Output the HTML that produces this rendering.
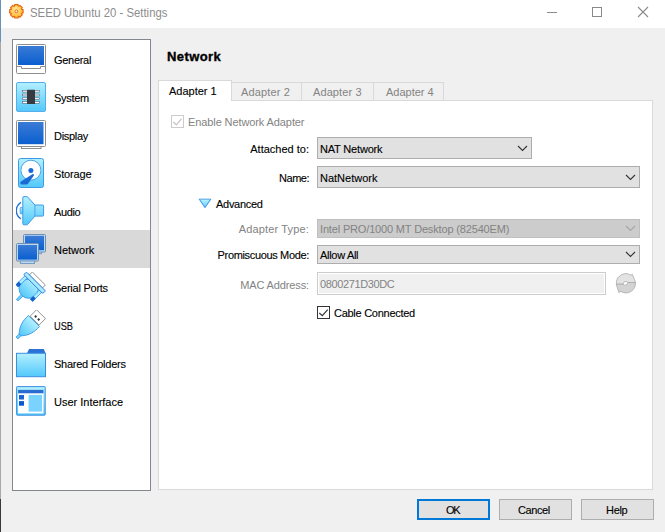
<!DOCTYPE html>
<html><head><meta charset="utf-8">
<style>
*{margin:0;padding:0;box-sizing:border-box}
html,body{width:665px;height:532px;overflow:hidden;background:#f0f0f0}
body{position:relative;font-family:"Liberation Sans",sans-serif;font-size:11px;color:#000;-webkit-text-stroke:0.12px currentColor}
.a{position:absolute}
.t{position:absolute;white-space:nowrap;line-height:13px;height:13px;font-size:11px}
.r{text-align:right}
.g{color:#838383;-webkit-text-stroke:0}
#title{left:0;top:0;width:665px;height:28px;background:#fff}
#lborder{left:0;top:0;width:1px;height:532px;background:linear-gradient(#6b93b8 0,#6b93b8 42px,#a9a9a9 42px,#a9a9a9 499px,#343a34 499px)}
#list{left:12px;top:39px;width:139px;height:452px;background:#fff;border:1px solid #828790}
.sel{left:13px;top:230px;width:137px;height:38px;background:#d9d9d9}
.ic{position:absolute;left:16px;width:30px;height:30px}
#pane{left:158px;top:100px;width:495px;height:390px;background:#fff;border:1px solid #d9d9d9}
.tab{position:absolute;top:82px;height:19px;background:#f0f0f0;border:1px solid #d9d9d9;border-bottom:none}
.tabsel{position:absolute;left:158px;top:80px;width:74px;height:21px;background:#fff;border:1px solid #d9d9d9;border-bottom:none}
.cb{position:absolute;left:317px;background:#e1e1e1;border:1px solid #adadad}
.cbd{background:#cccccc;border-color:#bfbfbf}
.btn{position:absolute;top:499px;width:73px;height:21px;background:#e1e1e1;border:1px solid #adadad;text-align:center;line-height:19px}
</style></head><body>
<div id="title" class="a"></div>
<div id="lborder" class="a"></div>

<!-- title bar -->
<svg class="a" style="left:8px;top:3px" width="17" height="17" viewBox="0 0 17 17">
  <defs><radialGradient id="gg" cx="0.45" cy="0.35" r="0.7"><stop offset="0" stop-color="#ffe690"/><stop offset="1" stop-color="#ffb42c"/></radialGradient></defs>
  <path d="M6.58 3.01 L6.73 1.60 L10.07 1.60 L10.22 3.01 L10.85 3.27 L11.95 2.39 L14.31 4.75 L13.43 5.85 L13.69 6.48 L15.10 6.63 L15.10 9.97 L13.69 10.12 L13.43 10.75 L14.31 11.85 L11.95 14.21 L10.85 13.33 L10.22 13.59 L10.07 15.00 L6.73 15.00 L6.58 13.59 L5.95 13.33 L4.85 14.21 L2.49 11.85 L3.37 10.75 L3.11 10.12 L1.70 9.97 L1.70 6.63 L3.11 6.48 L3.37 5.85 L2.49 4.75 L4.85 2.39 L5.95 3.27 Z" fill="url(#gg)" stroke="#e8640c" stroke-width="1.15" stroke-linejoin="round"/>
  <circle cx="8.4" cy="8.3" r="1.4" fill="#fff0d0" stroke="#e06010" stroke-width="0.9"/>
</svg>
<div class="t" style="left:30px;top:6px;font-size:12px;line-height:14px;height:14px;color:#8c8c8c;-webkit-text-stroke:0;transform:scaleX(0.945);transform-origin:0 0">SEED Ubuntu 20 - Settings</div>
<div class="a" style="left:547px;top:12px;width:10px;height:1px;background:#8a8a8a"></div>
<div class="a" style="left:592px;top:7px;width:10px;height:10px;border:1px solid #8a8a8a"></div>
<svg class="a" style="left:637px;top:6px" width="12" height="12" viewBox="0 0 12 12"><path d="M1 1 L11 11 M11 1 L1 11" stroke="#8a8a8a" stroke-width="1.1"/></svg>

<!-- list -->
<div id="list" class="a"></div>
<div class="a sel"></div>

<svg width="0" height="0" style="position:absolute">
 <defs>
  <linearGradient id="blu" x1="0" y1="0" x2="0" y2="1"><stop offset="0" stop-color="#3a7bd5"/><stop offset="1" stop-color="#0a5fd0"/></linearGradient>
  <linearGradient id="lb" x1="0" y1="0" x2="0" y2="1"><stop offset="0" stop-color="#b4f0ff"/><stop offset="1" stop-color="#52c8fa"/></linearGradient>
 </defs>
</svg>

<!-- General -->
<svg class="ic" style="top:44px" viewBox="0 0 30 30">
 <rect x="0.5" y="0.5" width="29" height="29" rx="1" fill="#fff" stroke="#8e8e8e"/>
 <rect x="2" y="2" width="26" height="19" fill="url(#blu)"/>
 <path d="M0.5 22.5 H5.5 V24.5 H24.5 V22.5 H29.5" fill="none" stroke="#8e8e8e"/>
</svg>
<div class="t" style="left:54px;top:54px;letter-spacing:-0.3px">General</div>

<!-- System -->
<svg class="ic" style="top:82px" viewBox="0 0 30 30">
 <rect x="0.5" y="0.5" width="29" height="29" rx="1.5" fill="url(#lb)" stroke="#58aeec"/>
 <g fill="#fff" stroke="#5a6a7a" stroke-width="0.6">
  <rect x="6.6" y="8.3" width="5" height="1.8"/><rect x="6.6" y="12.1" width="5" height="1.8"/><rect x="6.6" y="15.8" width="5" height="1.8"/><rect x="6.6" y="19.6" width="5" height="1.8"/>
  <rect x="18.4" y="8.3" width="5" height="1.8"/><rect x="18.4" y="12.1" width="5" height="1.8"/><rect x="18.4" y="15.8" width="5" height="1.8"/><rect x="18.4" y="19.6" width="5" height="1.8"/>
 </g>
 <rect x="11" y="7.8" width="8" height="14.3" rx="0.5" fill="#383a42"/>
</svg>
<div class="t" style="left:54px;top:92px;letter-spacing:-0.3px">System</div>

<!-- Display -->
<svg class="ic" style="top:120px" viewBox="0 0 30 30">
 <rect x="5.5" y="25" width="19.5" height="3.5" fill="#fff" stroke="#8e8e8e"/>
 <rect x="0.5" y="0.5" width="29" height="26" rx="1" fill="#fff" stroke="#8e8e8e"/>
 <rect x="2" y="2" width="25.5" height="22.2" fill="url(#blu)"/>
</svg>
<div class="t" style="left:54px;top:130px;letter-spacing:-0.3px">Display</div>

<!-- Storage -->
<svg class="ic" style="top:158px" viewBox="0 0 30 30">
 <rect x="2.5" y="0.5" width="25" height="29" rx="2" fill="url(#lb)" stroke="#3e9ae6"/>
 <circle cx="14.9" cy="12.2" r="10" fill="#fff" stroke="#4aa6ea" stroke-width="1"/>
 <circle cx="14.9" cy="12.4" r="2.5" fill="#1a6ad6"/>
 <path d="M4.3 24 L16.3 16.2 Q18.5 15.5 17.9 17.6 L12.2 25.6 Q11.6 26.6 10.4 26.6 L5.6 26.6 Q4 26.5 4.3 24 Z" fill="#1a6ad6"/>
</svg>
<div class="t" style="left:54px;top:168px;letter-spacing:-0.15px">Storage</div>

<!-- Audio -->
<svg class="ic" style="top:196px" viewBox="0 0 30 30">
 <path d="M4.9 6.4 A9.6 9.6 0 0 0 4.9 22.8" fill="none" stroke="#2070d8" stroke-width="1.4"/>
 <rect x="4.2" y="11.4" width="2.6" height="6.4" rx="0.6" fill="url(#lb)" stroke="#3e9ae6" stroke-width="0.8"/>
 <path d="M6.8 1.6 Q6.8 0.6 8 0.6 L10.6 0.6 Q11.3 0.6 11.8 1.1 L18.9 9 L26.6 9 Q27.6 9 27.6 10 L27.6 19.2 Q27.6 20.1 26.6 20.1 L18.9 20.1 L11.8 28.2 Q11.3 28.8 10.6 28.8 L8 28.8 Q6.8 28.8 6.8 27.6 Z" fill="url(#lb)" stroke="#3e9ae6"/>
 <path d="M18.9 9 V20.1" stroke="#3e9ae6" stroke-width="0.8"/>
</svg>
<div class="t" style="left:54px;top:206px;letter-spacing:-0.35px">Audio</div>

<!-- Network -->
<svg class="ic" style="top:234px" viewBox="0 0 30 30">
 <rect x="12" y="17.5" width="13.5" height="2.2" fill="#b8d8f4" stroke="#7a9cc0"/>
 <rect x="7.5" y="0.5" width="22" height="17.5" rx="1" fill="#b8d8f4" stroke="#6e90b4"/>
 <rect x="9" y="1.8" width="19" height="14.4" fill="url(#blu)"/>
 <rect x="0.5" y="9.5" width="22" height="17.6" rx="1" fill="#b8d8f4" stroke="#6e90b4"/>
 <rect x="2" y="11" width="19" height="14.6" fill="url(#blu)"/>
 <rect x="4.5" y="27" width="14" height="2.5" fill="#b8d8f4" stroke="#7a9cc0"/>
</svg>
<div class="t" style="left:54px;top:244px">Network</div>

<!-- Serial Ports -->
<svg class="ic" style="top:272px" viewBox="0 0 30 30">
 <g transform="translate(18.6 10.75) rotate(45)">
  <rect x="-9.2" y="-6" width="18.4" height="4.2" fill="#fff" stroke="#8e8e8e" stroke-width="0.9"/>
  <rect x="-1.2" y="17" width="2.4" height="7.6" fill="#6ad4ff" stroke="#3e9ae6" stroke-width="0.8"/>
  <circle cx="0" cy="8.4" r="9.6" fill="url(#lb)" stroke="#3e9ae6" stroke-width="0.9"/>
  <rect x="-11.8" y="1.5" width="3.2" height="13" fill="#a8eaff" stroke="#3e9ae6" stroke-width="0.8"/>
  <rect x="-12" y="10.4" width="3.6" height="4.4" fill="#1560cc"/>
  <rect x="8.6" y="1.5" width="3.2" height="13" fill="#a8eaff" stroke="#3e9ae6" stroke-width="0.8"/>
  <rect x="8.4" y="10.4" width="3.6" height="4.4" fill="#1560cc"/>
  <rect x="-13.4" y="-1.9" width="26.8" height="3.8" rx="0.8" fill="#a8eaff" stroke="#2a7ad8" stroke-width="0.9"/>
 </g>
</svg>
<div class="t" style="left:54px;top:282px;letter-spacing:-0.25px">Serial Ports</div>

<!-- USB -->
<svg class="ic" style="top:310px" viewBox="0 0 30 30">
 <g transform="translate(17.95 11) rotate(45)">
  <rect x="-6.1" y="-9.8" width="12.6" height="9" fill="#fff" stroke="#8e8e8e" stroke-width="0.9"/>
  <rect x="-3" y="-5.4" width="2" height="2" fill="#333"/>
  <rect x="1.3" y="-5.4" width="2" height="2" fill="#333"/>
  <rect x="-1.3" y="18.5" width="2.6" height="5.5" fill="#6ad4ff" stroke="#3e9ae6" stroke-width="0.8"/>
  <path d="M-7.7 0 L7.7 0 C8.2 7 7 13.5 1.4 19.6 L-1.4 19.6 C-7 13.5 -8.2 7 -7.7 0 Z" fill="url(#lb)" stroke="#3e9ae6" stroke-width="0.9"/>
 </g>
</svg>
<div class="t" style="left:54px;top:320px;transform:scaleX(0.84);transform-origin:0 0">USB</div>

<!-- Shared Folders -->
<svg class="ic" style="top:348px" viewBox="0 0 30 30">
 <path d="M10.8 5.5 L13.1 1.1 L27.8 1.1 L29.6 5.5 Z" fill="#2a72d6"/>
 <rect x="0.5" y="5.3" width="29" height="23.4" fill="url(#lb)" stroke="#3a8ee0"/>
</svg>
<div class="t" style="left:54px;top:358px;letter-spacing:-0.25px">Shared Folders</div>

<!-- User Interface -->
<svg class="ic" style="top:386px" viewBox="0 0 30 30">
 <rect x="0.6" y="0.6" width="28.6" height="28.6" rx="0.6" fill="url(#lb)" stroke="#3a8ee0"/>
 <rect x="2.1" y="7" width="25.3" height="20.4" fill="#fff"/>
 <rect x="2.1" y="3.9" width="25.3" height="3.4" fill="#2a6cd0"/>
 <rect x="3" y="9" width="5" height="4.5" fill="#1c62d2"/>
 <rect x="3" y="15.1" width="5" height="4.6" fill="#0a58d0"/>
 <rect x="12.6" y="8.9" width="13.4" height="16.7" fill="#7ad2ff"/>
</svg>
<div class="t" style="left:54px;top:396px">User Interface</div>

<!-- right panel -->
<div class="t" style="left:167px;top:50px;font-size:13px;font-weight:bold;letter-spacing:0.4px;-webkit-text-stroke:0.35px #000">Network</div>

<div class="tab" style="left:231px;width:71px"></div>
<div class="tab" style="left:301px;width:73px"></div>
<div class="tab" style="left:373px;width:71px"></div>
<div id="pane" class="a"></div>
<div class="tabsel"></div>
<div class="t" style="left:169px;top:85px">Adapter 1</div>
<div class="t g" style="left:241px;top:86px;letter-spacing:0.15px">Adapter 2</div>
<div class="t g" style="left:313px;top:86px;letter-spacing:0.1px">Adapter 3</div>
<div class="t g" style="left:386px;top:86px">Adapter 4</div>

<!-- enable checkbox -->
<div class="a" style="left:171px;top:115px;width:13px;height:13px;border:1px solid #cccccc;background:#fff"></div>
<svg class="a" style="left:171px;top:115px" width="13" height="13" viewBox="0 0 13 13"><path d="M2.3 7 L5.3 9.8 L10.7 3.6" fill="none" stroke="#c6c6c6" stroke-width="1.25"/></svg>
<div class="t g" style="left:188px;top:116px;letter-spacing:-0.1px">Enable Network Adapter</div>

<div class="t r" style="left:200px;width:109px;top:143px">Attached to:</div>
<div class="cb" style="top:137px;width:215px;height:22px"></div>
<div class="t" style="left:320px;top:143px;letter-spacing:-0.18px">NAT Network</div>
<svg class="a" style="left:517px;top:145px" width="11" height="7" viewBox="0 0 11 7"><path d="M1 1 L5.5 5.5 L10 1" fill="none" stroke="#333" stroke-width="1.1"/></svg>

<div class="t r" style="left:200px;width:109px;top:172px;letter-spacing:-0.5px">Name:</div>
<div class="cb" style="top:166px;width:323px;height:22px"></div>
<div class="t" style="left:320px;top:172px">NatNetwork</div>
<svg class="a" style="left:625px;top:174px" width="11" height="7" viewBox="0 0 11 7"><path d="M1 1 L5.5 5.5 L10 1" fill="none" stroke="#333" stroke-width="1.1"/></svg>

<svg class="a" style="left:198px;top:198px" width="14" height="11" viewBox="0 0 14 11"><defs><linearGradient id="tg" x1="0" y1="0" x2="0" y2="1"><stop offset="0" stop-color="#b8f2ff"/><stop offset="1" stop-color="#62cdfb"/></linearGradient></defs><path d="M1.3 1.3 L12.7 1.3 L7 9.5 Z" fill="url(#tg)" stroke="#4a9ae6" stroke-width="1.1" stroke-linejoin="round"/><path d="M2 1.3 L12 1.3" stroke="#7cc0f0" stroke-width="1.1"/></svg>
<div class="t" style="left:216px;top:198px;letter-spacing:-0.28px">Advanced</div>

<div class="t r g" style="left:200px;width:109px;top:223px;letter-spacing:0.15px">Adapter Type:</div>
<div class="cb cbd" style="top:219px;width:323px;height:19px"></div>
<div class="t g" style="left:320px;top:223px;letter-spacing:-0.16px">Intel PRO/1000 MT Desktop (82540EM)</div>
<svg class="a" style="left:625px;top:225px" width="11" height="7" viewBox="0 0 11 7"><path d="M1 1 L5.5 5.5 L10 1" fill="none" stroke="#a6a6a6" stroke-width="1.1"/></svg>

<div class="t r" style="left:200px;width:109px;top:249px;letter-spacing:-0.34px">Promiscuous Mode:</div>
<div class="cb" style="top:245px;width:323px;height:19px"></div>
<div class="t" style="left:320px;top:249px;letter-spacing:-0.3px">Allow All</div>
<svg class="a" style="left:625px;top:251px" width="11" height="7" viewBox="0 0 11 7"><path d="M1 1 L5.5 5.5 L10 1" fill="none" stroke="#333" stroke-width="1.1"/></svg>

<div class="t r g" style="left:200px;width:109px;top:279px;letter-spacing:-0.13px">MAC Address:</div>
<div class="a" style="left:317px;top:272px;width:289px;height:23px;border:1px solid #cccccc;background:#f0f0f0;box-shadow:inset 0 0 0 1px #fff"></div>
<div class="t g" style="left:320px;top:278px;letter-spacing:-0.38px">0800271D30DC</div>
<svg class="a" style="left:615px;top:273px" width="22" height="21" viewBox="0 0 22 21">
 <path d="M1.4 11.2 A9.5 9.5 0 0 1 15.9 2.2 L17.3 1.3 L19.3 6.2 A9.5 9.5 0 0 1 20.4 9.5 L12.9 9.5 A2.8 2.8 0 0 0 8 11.2 Z" fill="#e3e3e3" stroke="#a9a9a9" stroke-width="0.8" stroke-linejoin="round"/>
 <path d="M20.4 9.5 A9.5 9.5 0 0 1 5.9 18.4 L3.9 19.6 L2.3 14.6 A9.5 9.5 0 0 1 1.4 11.2 L8 11.2 A2.8 2.8 0 0 0 12.9 9.5 Z" fill="#d3d3d3" stroke="#a9a9a9" stroke-width="0.8" stroke-linejoin="round"/>
</svg>

<div class="a" style="left:317px;top:306px;width:13px;height:13px;border:1px solid #333;background:#fff"></div>
<svg class="a" style="left:317px;top:306px" width="13" height="13" viewBox="0 0 13 13"><path d="M2.3 7 L5.3 9.6 L10.7 3.7" fill="none" stroke="#333" stroke-width="1.2"/></svg>
<div class="t" style="left:334px;top:307px;letter-spacing:-0.27px">Cable Connected</div>

<!-- buttons -->
<div class="btn" style="left:417px;border:2px solid #0078d7"></div>
<div class="btn" style="left:499px"></div>
<div class="btn" style="left:581px"></div>
<div class="t" style="left:446px;top:504px;letter-spacing:-1.2px">OK</div>
<div class="t" style="left:518px;top:504px;letter-spacing:-0.4px">Cancel</div>
<div class="t" style="left:606px;top:504px;letter-spacing:-0.3px">Help</div>
</body></html>
